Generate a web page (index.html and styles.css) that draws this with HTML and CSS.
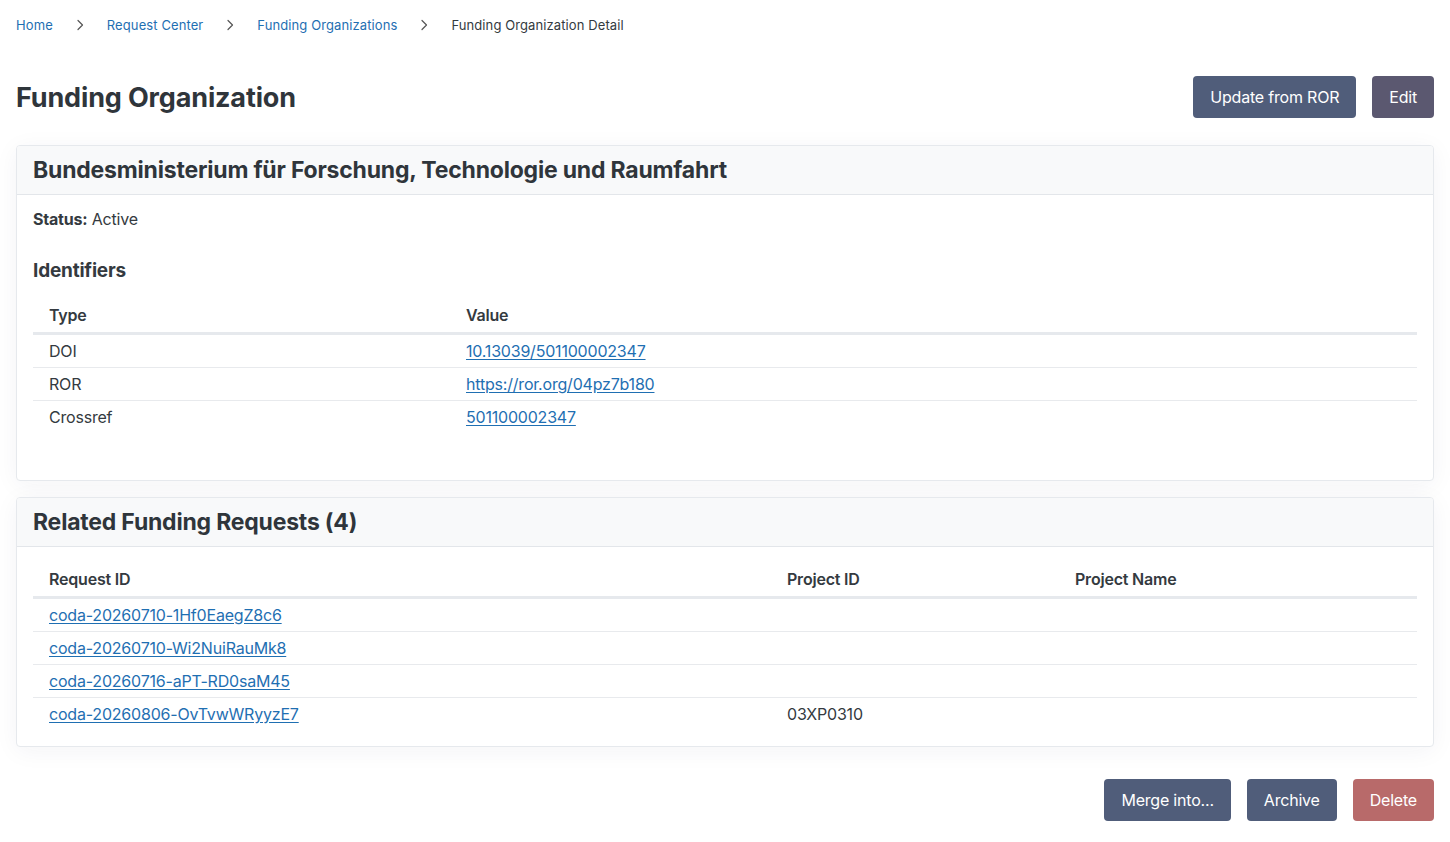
FILE: index.html
```html
<!DOCTYPE html>
<html lang="en">
<head>
<meta charset="utf-8">
<title>Funding Organization Detail</title>
<link rel="stylesheet" href="styles.css">
</head>
<body>
<div class="page">
  <nav class="breadcrumb">
    <a href="#">Home</a>
    <svg class="sep" viewBox="0 0 8 12" width="8" height="12"><path d="M2 1.5 L6.5 6 L2 10.5" fill="none" stroke="#555" stroke-width="1.2" stroke-linecap="round" stroke-linejoin="round"/></svg>
    <a href="#">Request Center</a>
    <svg class="sep" viewBox="0 0 8 12" width="8" height="12"><path d="M2 1.5 L6.5 6 L2 10.5" fill="none" stroke="#555" stroke-width="1.2" stroke-linecap="round" stroke-linejoin="round"/></svg>
    <a href="#">Funding Organizations</a>
    <svg class="sep" viewBox="0 0 8 12" width="8" height="12"><path d="M2 1.5 L6.5 6 L2 10.5" fill="none" stroke="#555" stroke-width="1.2" stroke-linecap="round" stroke-linejoin="round"/></svg>
    <span class="current">Funding Organization Detail</span>
  </nav>

  <div class="title-row">
    <h1>Funding Organization</h1>
    <div class="actions">
      <button class="btn btn-primary">Update from ROR</button>
      <button class="btn btn-edit">Edit</button>
    </div>
  </div>

  <section class="card">
    <header class="card-header"><h2>Bundesministerium für Forschung, Technologie und Raumfahrt</h2></header>
    <div class="card-body card-body-org">
      <p class="status"><strong>Status:</strong> Active</p>
      <h3>Identifiers</h3>
      <table class="tbl tbl-ids">
        <thead><tr><th class="col-type">Type</th><th>Value</th></tr></thead>
        <tbody>
          <tr><td>DOI</td><td><a href="#">10.13039/501100002347</a></td></tr>
          <tr><td>ROR</td><td><a href="#">https://ror.org/04pz7b180</a></td></tr>
          <tr><td>Crossref</td><td><a href="#">501100002347</a></td></tr>
        </tbody>
      </table>
    </div>
  </section>

  <section class="card">
    <header class="card-header"><h2>Related Funding Requests (4)</h2></header>
    <div class="card-body card-body-req">
      <table class="tbl tbl-req">
        <thead><tr><th class="col-req">Request ID</th><th class="col-pid">Project ID</th><th>Project Name</th></tr></thead>
        <tbody>
          <tr><td><a href="#">coda-20260710-1Hf0EaegZ8c6</a></td><td></td><td></td></tr>
          <tr><td><a href="#">coda-20260710-Wi2NuiRauMk8</a></td><td></td><td></td></tr>
          <tr><td><a href="#">coda-20260716-aPT-RD0saM45</a></td><td></td><td></td></tr>
          <tr><td><a href="#">coda-20260806-OvTvwWRyyzE7</a></td><td>03XP0310</td><td></td></tr>
        </tbody>
      </table>
    </div>
  </section>

  <div class="footer-actions">
    <button class="btn btn-primary">Merge into...</button>
    <button class="btn btn-primary">Archive</button>
    <button class="btn btn-danger">Delete</button>
  </div>
</div>
</body>
</html>
```

FILE: styles.css
```css
* { box-sizing: border-box; }
html, body { margin: 0; padding: 0; background: #fff; }
body {
  font-family: Inter, "Noto Sans", "Liberation Sans", sans-serif;
  color: #343a40;
  font-size: 16px;
  letter-spacing: -0.2px;
}
.page { padding: 0 16px; }
a { color: #1f6fb2; }

.breadcrumb {
  display: flex;
  align-items: center;
  height: 50px;
  font-size: 13px;
  letter-spacing: 0.1px;
  padding-bottom: 1px;
}
.breadcrumb a { text-decoration: none; color: #1f6fb2; }
.breadcrumb .sep { margin: 0 23px; display: block; }
.breadcrumb .current { color: #343a40; }

.title-row {
  display: flex;
  justify-content: space-between;
  align-items: center;
  margin-top: 26px;
  margin-bottom: 27px;
}
h1 { margin: 0; font-size: 27px; font-weight: 700; color: #2f353b; letter-spacing: -0.15px; }
.actions { display: flex; gap: 16px; }

.btn {
  font-family: inherit;
  font-size: 16px;
  letter-spacing: -0.2px;
  color: #fff;
  border: none;
  border-radius: 4px;
  height: 42px;
  padding: 0 17px;
  cursor: pointer;
}
.btn-primary { background: #505d7a; }
.btn-edit { background: #5b5870; }
.btn-danger { background: #b86a6a; }

.card {
  border: 1px solid #e6e9ed;
  border-radius: 4px;
  background: #fff;
  box-shadow: 0 4px 24px rgba(30, 40, 80, 0.05);
  margin-bottom: 16px;
  overflow: hidden;
}
.card-header {
  background: #f8f9fa;
  border-bottom: 1px solid #e3e6ea;
  padding: 0 16px;
  height: 49px;
  display: flex;
  align-items: center;
}
.card-header h2 { margin: 0; font-size: 23px; font-weight: 700; color: #2f353b; letter-spacing: -0.2px; }
.card-body { padding: 0 16px; }
.card-body-org { padding-top: 14px; padding-bottom: 46px; }
.card-body-req { padding-top: 14px; padding-bottom: 16px; }

.status { margin: 0 0 30px; line-height: 20px; }
.status strong { font-weight: 700; }
h3 { margin: 0 0 14px; font-size: 19px; font-weight: 700; line-height: 24px; }

.tbl { width: 100%; border-collapse: collapse; }
.tbl th {
  text-align: left;
  font-weight: 600;
  padding: 8px 16px 7px;
  border-bottom: 3px solid #e6e9ed;
  line-height: 20px;
}
.tbl td {
  padding: 6px 16px;
  border-bottom: 1px solid #e8eaed;
  line-height: 20px;
  height: 33px;
}
.tbl tbody tr:last-child td { border-bottom: none; }
.tbl td a { text-underline-offset: 2px; }
.col-type { width: 417px; }
.col-req { width: 738px; }
.col-pid { width: 288px; }

.footer-actions {
  display: flex;
  justify-content: flex-end;
  gap: 16px;
  margin-top: 32px;
}
```
